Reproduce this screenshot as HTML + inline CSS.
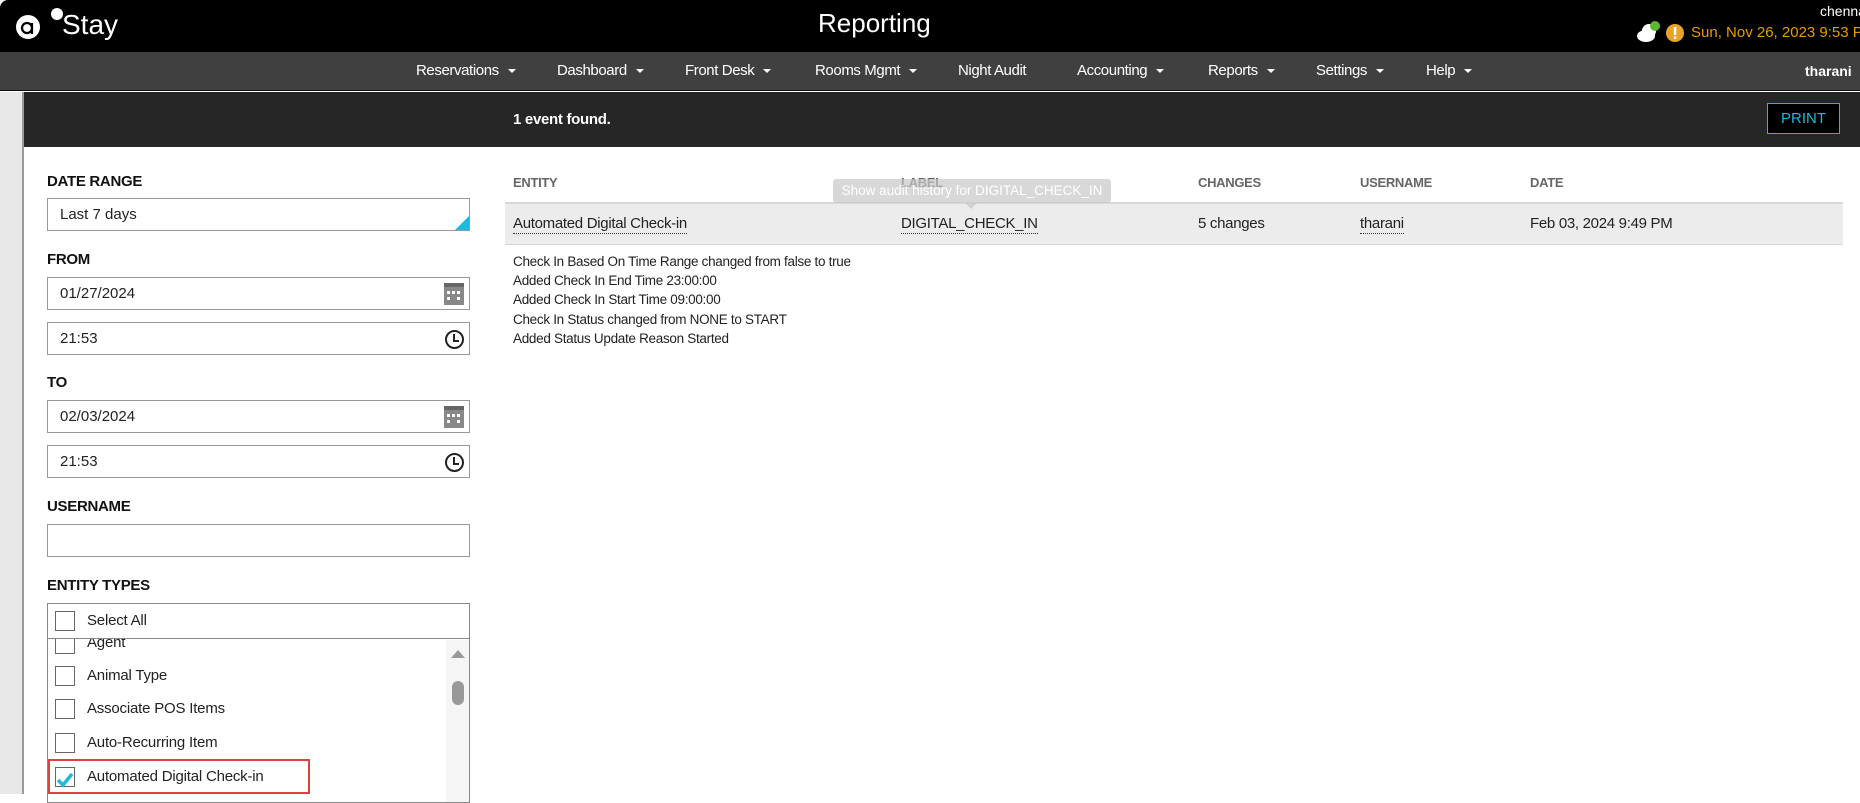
<!DOCTYPE html>
<html><head><meta charset="utf-8"><style>
*{margin:0;padding:0;box-sizing:border-box}
body{width:1860px;height:794px;overflow:hidden;background:#fff;font-family:"Liberation Sans",sans-serif;position:relative;color:#222}
.a{position:absolute;white-space:nowrap}
#top{left:0;top:0;width:1860px;height:52px;background:#000;border-top-left-radius:8px}
#nav{left:0;top:52px;width:1860px;height:39px;background:#404040;border-bottom:1px solid #111}
.nv{color:#fff;font-size:15px;top:62px;letter-spacing:-0.4px}
.car{display:inline-block;width:0;height:0;border-left:4px solid transparent;border-right:4px solid transparent;border-top:4px solid #fff;margin-left:9px;vertical-align:middle}
#bar{left:24px;top:92px;width:1836px;height:55px;background:#262626}
#strip{left:0;top:92px;width:24px;height:702px;background:#e8e8e8;border-right:2px solid #999}
.lbl{font-size:15px;font-weight:bold;color:#111;left:47px;letter-spacing:-0.3px}
.inp{left:47px;width:423px;height:33px;border:1px solid #999;background:#fff;font-size:15px;padding:7px 12px;color:#222}
.cal{position:absolute;right:5px;top:5px;width:20px;height:22px;background:#888;border-top:4px solid #666}
.cal i{position:absolute;background:#fff;width:3px;height:3px}
.clk{position:absolute;right:5px;top:7px;width:19px;height:19px;border:2px solid #222;border-radius:50%}
.clk:after{content:"";position:absolute;left:6px;top:2px;width:4px;height:6px;border-left:2px solid #222;border-bottom:2px solid #222}
.cb{position:absolute;left:7px;width:20px;height:20px;border:1px solid #666;background:#fff}
.it{position:absolute;left:39px;font-size:15px;color:#222;letter-spacing:-0.2px}
.th{font-size:13px;font-weight:bold;color:#666;top:175px;letter-spacing:-0.3px}
.td{font-size:15px;color:#222;top:215px;letter-spacing:-0.3px}
.u{border-bottom:1px dotted #333;padding-bottom:1px}
.ch{left:513px;font-size:13.5px;color:#222;letter-spacing:-0.3px}
</style></head><body>
<div id="top" class="a"></div>
<svg class="a" style="left:14px;top:4px" width="60" height="44"><circle cx="14" cy="23" r="12" fill="#fff"/><circle cx="13" cy="24" r="5" fill="none" stroke="#000" stroke-width="2.2"/><path d="M18 19 L18 30" stroke="#000" stroke-width="2.2"/><circle cx="43" cy="10" r="6" fill="#fff"/></svg>
<div class="a" style="left:62px;top:9px;color:#fff;font-size:28px">Stay</div>
<div class="a" style="left:818px;top:8px;color:#fff;font-size:26px">Reporting</div>
<div class="a" style="left:1820px;top:3px;color:#fff;font-size:14px">chennai</div>
<svg class="a" style="left:1636px;top:20px" width="50" height="24"><ellipse cx="10" cy="16" rx="9" ry="6" fill="#fff"/><circle cx="13" cy="11" r="7" fill="#fff"/><circle cx="19" cy="6" r="5" fill="#5cb82e"/><circle cx="39" cy="13" r="9" fill="#e8a428"/><rect x="37.8" y="7" width="2.5" height="8" fill="#fff"/><rect x="37.8" y="16.5" width="2.5" height="2.5" fill="#fff"/></svg>
<div class="a" style="left:1691px;top:24px;color:#e89a00;font-size:15px">Sun, Nov 26, 2023 9:53 PM</div>
<div id="nav" class="a"></div>
<div class="a nv" style="left:416px">Reservations<span class="car"></span></div>
<div class="a nv" style="left:557px">Dashboard<span class="car"></span></div>
<div class="a nv" style="left:685px">Front Desk<span class="car"></span></div>
<div class="a nv" style="left:815px">Rooms Mgmt<span class="car"></span></div>
<div class="a nv" style="left:958px">Night Audit</div>
<div class="a nv" style="left:1077px">Accounting<span class="car"></span></div>
<div class="a nv" style="left:1208px">Reports<span class="car"></span></div>
<div class="a nv" style="left:1316px">Settings<span class="car"></span></div>
<div class="a nv" style="left:1426px">Help<span class="car"></span></div>
<div class="a" style="left:1805px;top:63px;color:#fff;font-size:14px;font-weight:bold">tharani</div>
<div id="bar" class="a"></div>
<div class="a" style="left:513px;top:111px;color:#fff;font-size:15px;font-weight:bold;letter-spacing:-0.3px">1 event found.</div>
<div class="a" style="left:1767px;top:103px;width:73px;height:31px;border:1px solid #1fb8e0;background:#000;color:#1fb8e0;font-size:15px;text-align:center;line-height:29px">PRINT</div>
<div id="strip" class="a"></div>

<div class="a lbl" style="top:173px">DATE RANGE</div>
<div class="a inp" style="top:198px">Last 7 days<div style="position:absolute;right:0;bottom:0;width:0;height:0;border-left:14px solid transparent;border-bottom:14px solid #1fb8e0"></div></div>
<div class="a lbl" style="top:251px">FROM</div>
<div class="a inp" style="top:277px">01/27/2024<div class="cal"><i style="left:3px;top:4px"></i><i style="left:8px;top:4px"></i><i style="left:13px;top:4px"></i><i style="left:3px;top:10px"></i><i style="left:13px;top:10px"></i></div></div>
<div class="a inp" style="top:322px">21:53<div class="clk"></div></div>
<div class="a lbl" style="top:374px">TO</div>
<div class="a inp" style="top:400px">02/03/2024<div class="cal"><i style="left:3px;top:4px"></i><i style="left:8px;top:4px"></i><i style="left:13px;top:4px"></i><i style="left:3px;top:10px"></i><i style="left:13px;top:10px"></i></div></div>
<div class="a inp" style="top:445px">21:53<div class="clk"></div></div>
<div class="a lbl" style="top:498px">USERNAME</div>
<div class="a inp" style="top:524px"></div>
<div class="a lbl" style="top:577px">ENTITY TYPES</div>
<div class="a" style="left:47px;top:603px;width:423px;height:200px;border:1px solid #888;background:#fff;overflow:hidden">
 <div style="position:absolute;left:0;top:0;width:421px;height:35px;border-bottom:1px solid #888;background:#fff;z-index:2"><div class="cb" style="top:7px"></div><div class="it" style="top:8px">Select All</div></div>
 <div class="cb" style="top:30px"></div><div class="it" style="top:30px">Agent</div>
 <div class="cb" style="top:62px"></div><div class="it" style="top:63px">Animal Type</div>
 <div class="cb" style="top:95px"></div><div class="it" style="top:96px">Associate POS Items</div>
 <div class="cb" style="top:129px"></div><div class="it" style="top:130px">Auto-Recurring Item</div>
 <div class="cb" style="top:163px"></div><div class="it" style="top:164px">Automated Digital Check-in</div>
 <svg style="position:absolute;left:8px;top:167px" width="20" height="18"><path d="M2 9 L7 14 L16 3" fill="none" stroke="#1fb8e0" stroke-width="3.5"/></svg>
 <div style="position:absolute;left:398px;top:36px;width:23px;height:170px;background:#f5f5f5"></div>
 <div style="position:absolute;left:403px;top:46px;width:0;height:0;border-left:7px solid transparent;border-right:7px solid transparent;border-bottom:8px solid #999"></div>
 <div style="position:absolute;left:404px;top:77px;width:12px;height:24px;border-radius:6px;background:#999"></div>
</div>
<div class="a" style="left:48px;top:759px;width:262px;height:35px;border:2px solid #e04040"></div>

<div class="a th" style="left:513px">ENTITY</div>
<div class="a th" style="left:901px">LABEL</div>
<div class="a th" style="left:1198px">CHANGES</div>
<div class="a th" style="left:1360px">USERNAME</div>
<div class="a th" style="left:1530px">DATE</div>
<div class="a" style="left:505px;top:202px;width:1338px;height:43px;background:#ececec;border-top:2px solid #d8d8d8;border-bottom:1px solid #d8d8d8"></div>
<div class="a td" style="left:513px"><span class="u">Automated Digital Check-in</span></div>
<div class="a td" style="left:901px"><span class="u">DIGITAL_CHECK_IN</span></div>
<div class="a td" style="left:1198px">5 changes</div>
<div class="a td" style="left:1360px"><span class="u">tharani</span></div>
<div class="a td" style="left:1530px">Feb 03, 2024 9:49 PM</div>
<div class="a" style="left:833px;top:179px;width:278px;height:24px;background:rgba(200,200,200,.7);border-radius:3px;color:#fff;font-size:13.5px;text-align:center;line-height:24px">Show audit history for DIGITAL_CHECK_IN</div>
<div class="a" style="left:965px;top:203px;width:0;height:0;border-left:6px solid transparent;border-right:6px solid transparent;border-top:6px solid rgba(200,200,200,.7)"></div>
<div class="a ch" style="top:254px">Check In Based On Time Range changed from false to true</div>
<div class="a ch" style="top:273px">Added Check In End Time 23:00:00</div>
<div class="a ch" style="top:292px">Added Check In Start Time 09:00:00</div>
<div class="a ch" style="top:312px">Check In Status changed from NONE to START</div>
<div class="a ch" style="top:331px">Added Status Update Reason Started</div>
</body></html>
